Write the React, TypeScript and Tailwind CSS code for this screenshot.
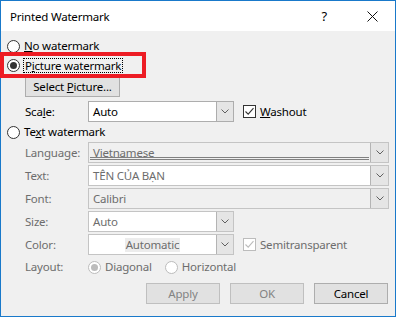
import React from "react";

const font = "font-['Noto_Sans',sans-serif] text-[11.5px] leading-[14px] tracking-[-0.2px]";

function Radio({ checked = false, disabled = false }: { checked?: boolean; disabled?: boolean }) {
  return (
    <span
      className={`flex h-[13px] w-[13px] shrink-0 items-center justify-center rounded-full border bg-white ${
        disabled ? "border-[#bcbcbc]" : "border-[#333333]"
      }`}
    >
      {checked && (
        <span className={`h-[7px] w-[7px] rounded-full ${disabled ? "bg-[#bcbcbc]" : "bg-[#333333]"}`} />
      )}
    </span>
  );
}

function Check({ disabled = false }: { disabled?: boolean }) {
  const c = disabled ? "#bcbcbc" : "#333333";
  return (
    <span
      className={`flex h-[13px] w-[13px] shrink-0 items-center justify-center border bg-white ${
        disabled ? "border-[#bcbcbc]" : "border-[#333333]"
      }`}
    >
      <svg width="11" height="11" viewBox="0 0 11 11">
        <path d="M1.5 5.5 L4.2 8.2 L9.5 2.2" fill="none" stroke={c} strokeWidth="1.1" />
      </svg>
    </span>
  );
}

function Arrow({ w = 17, disabled = false }: { w?: number; disabled?: boolean }) {
  return (
    <span
      className={`flex h-full shrink-0 items-center justify-center border-l bg-[#e5e5e5] ${
        disabled ? "border-[#b4b4b4]" : "border-[#adadad]"
      } ${w === 17 ? "w-[17px]" : "w-[18px]"}`}
    >
      <svg width="8" height="5" viewBox="0 0 8 5">
        <path d="M0.5 0.5 L4 4 L7.5 0.5" fill="none" stroke="#606060" strokeWidth="1" />
      </svg>
    </span>
  );
}

function Combo({
  value,
  wide = false,
  disabled = false,
  white = true,
  center = false,
  double = false,
}: {
  value: string;
  wide?: boolean;
  disabled?: boolean;
  white?: boolean;
  center?: boolean;
  double?: boolean;
}) {
  return (
    <div
      className={`flex h-[21px] shrink-0 border ${wide ? "w-[301px]" : "w-[146px]"} ${
        disabled ? "border-[#c4c4c4]" : "border-[#adadad]"
      } ${white ? "bg-white" : "bg-[#f0f0f0]"}`}
    >
      <div className="relative flex min-w-0 flex-1 items-center">
        {center ? (
          <span className="mx-auto bg-[#ececec] px-[1px] text-[#6d6d6d]">{value}</span>
        ) : (
          <span className={`pl-[4px] ${disabled ? "text-[#6d6d6d]" : "text-black"}`}>{value}</span>
        )}
        {double && (
          <div className="absolute right-[1px] bottom-[2px] left-[1px] h-[3px] border-y border-[#808080]" />
        )}
      </div>
      <Arrow w={wide ? 18 : 17} disabled={disabled} />
    </div>
  );
}

function Btn({ label, disabled = false, wide = false }: { label: React.ReactNode; disabled?: boolean; wide?: boolean }) {
  return (
    <button
      className={`flex h-[21px] items-center justify-center whitespace-nowrap border bg-[#e1e1e1] ${
        wide ? "w-[95px]" : "w-[74px]"
      } ${disabled ? "border-[#bfbfbf] text-[#838383]" : "border-[#adadad] text-black"}`}
    >
      {label}
    </button>
  );
}

const fields = [
  { label: "Text:", value: "TÊN CỦA BẠN", white: true },
  { label: "Font:", value: "Calibri", white: false },
];

export default function App() {
  return (
    <div className={`${font} relative flex h-[317px] w-[396px] flex-col border border-[#1979ca] bg-[#f0f0f0] text-black`}>
      {/* title bar */}
      <div className="flex h-[30px] shrink-0 items-center bg-white pl-[9px]">
        <span className="pt-[1px]">Printed Watermark</span>
        <span className="ml-auto mr-[40px] text-[13px]">?</span>
        <svg className="mr-[17px]" width="11" height="11" viewBox="0 0 11 11">
          <path d="M0.5 0.5 L10.5 10.5 M10.5 0.5 L0.5 10.5" stroke="#111" strokeWidth="1" />
        </svg>
      </div>

      <div className="flex flex-col pl-[6px]">
        <div className="mt-[8px] flex h-[14px] items-center">
          <Radio />
          <span className="ml-[4px]">
            <u>N</u>o watermark
          </span>
        </div>
        <div className="mt-[5px] flex h-[14px] items-center">
          <Radio checked />
          <span className="ml-[3px] border border-dotted border-black px-[1px] leading-[13px]">
            P<u>i</u>cture watermark
          </span>
        </div>
        <div className="mt-[4px] pl-[18px]">
          <Btn
            wide
            label={
              <span>
                Select <u>P</u>icture...
              </span>
            }
          />
        </div>
        <div className="mt-[4px] flex items-center pl-[18px]">
          <span className="w-[63px]">
            Sca<u>l</u>e:
          </span>
          <Combo value="Auto" />
          <span className="ml-[9px]">
            <Check />
          </span>
          <span className="ml-[4px]">
            <u>W</u>ashout
          </span>
        </div>
        <div className="mt-[3px] flex h-[14px] items-center">
          <Radio />
          <span className="ml-[4px]">
            Te<u>x</u>t watermark
          </span>
        </div>

        <div className="mt-[3px] flex flex-col gap-[2px] pl-[18px] text-[#6d6d6d]">
          <div className="flex items-center">
            <span className="w-[63px]">Language:</span>
            <Combo value="Vietnamese" wide disabled white={false} double />
          </div>
          {fields.map((f) => (
            <div key={f.label} className="flex items-center">
              <span className="w-[63px]">{f.label}</span>
              <Combo value={f.value} wide disabled white={f.white} />
            </div>
          ))}
          <div className="flex items-center">
            <span className="w-[63px]">Size:</span>
            <Combo value="Auto" disabled />
          </div>
          <div className="flex items-center">
            <span className="w-[63px]">Color:</span>
            <Combo value="Automatic" disabled center />
            <span className="ml-[9px]">
              <Check disabled />
            </span>
            <span className="ml-[4px]">Semitransparent</span>
          </div>
          <div className="mt-[3px] flex h-[14px] items-center">
            <span className="w-[63px]">Layout:</span>
            <Radio checked disabled />
            <span className="ml-[4px]">Diagonal</span>
            <span className="ml-[13px]">
              <Radio disabled />
            </span>
            <span className="ml-[4px]">Horizontal</span>
          </div>
        </div>
      </div>

      <div className="mt-[9px] flex justify-end gap-[10px] pr-[7px]">
        <Btn label="Apply" disabled />
        <Btn label="OK" disabled />
        <Btn label="Cancel" />
      </div>

      {/* annotation box */}
      <div className="absolute top-[51px] left-[-1px] h-[26px] w-[146px] border-4 border-[#ed1c24]" />
    </div>
  );
}
